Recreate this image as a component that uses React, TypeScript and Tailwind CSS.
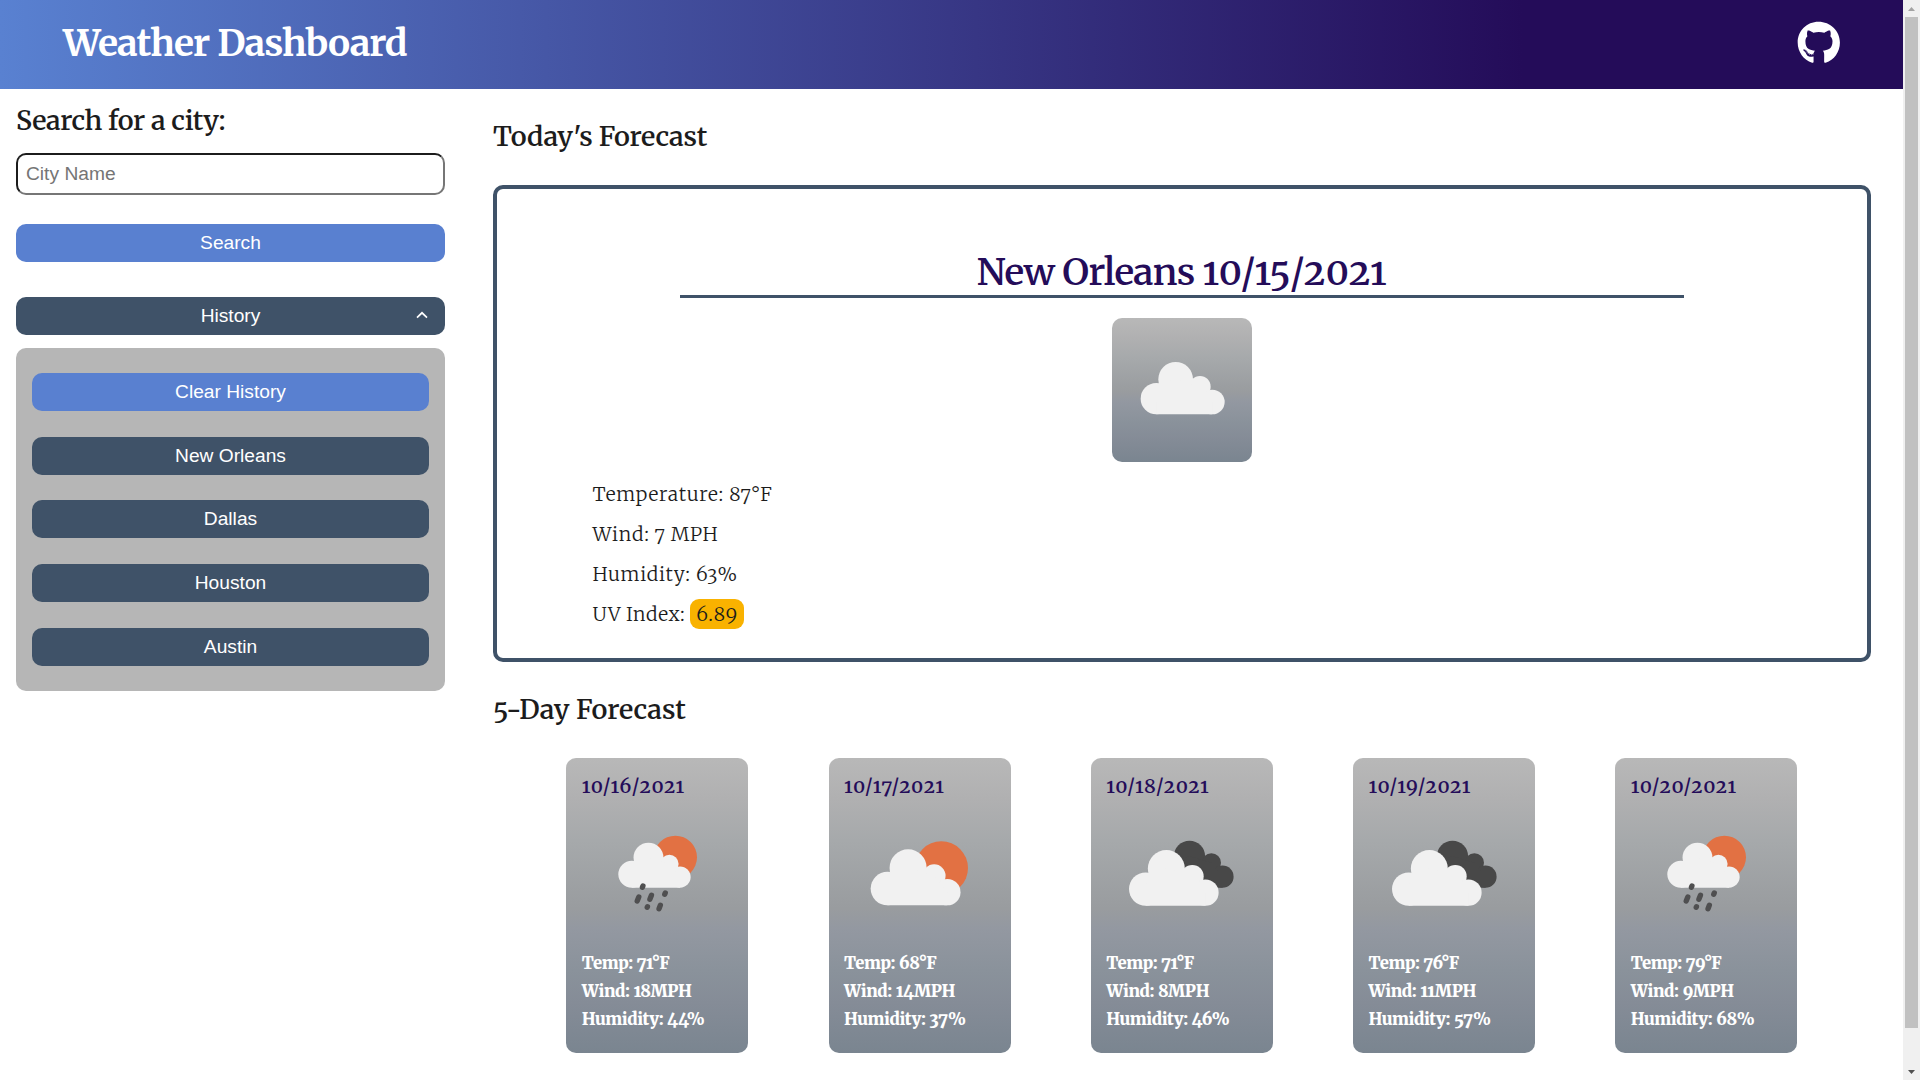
import { useState } from "react";
import { FaGithub } from "react-icons/fa";

type Sky = "rain" | "few" | "broken";

const days: { date: string; sky: Sky; temp: number; wind: number; humidity: number }[] = [
  { date: "10/16/2021", sky: "rain", temp: 71, wind: 18, humidity: 44 },
  { date: "10/17/2021", sky: "few", temp: 68, wind: 14, humidity: 37 },
  { date: "10/18/2021", sky: "broken", temp: 71, wind: 8, humidity: 46 },
  { date: "10/19/2021", sky: "broken", temp: 76, wind: 11, humidity: 57 },
  { date: "10/20/2021", sky: "rain", temp: 79, wind: 9, humidity: 68 },
];

const cities = ["New Orleans", "Dallas", "Houston", "Austin"];

function Cloud({ x, y, scale, fill }: { x: number; y: number; scale: number; fill: string }) {
  return (
    <g transform={`translate(${x} ${y}) scale(${scale})`} fill={fill}>
      <circle cx="47" cy="110" r="47" />
      <circle cx="105" cy="52" r="52" />
      <circle cx="178" cy="74" r="32" />
      <circle cx="215" cy="120" r="37" />
      <path d="M47 157V110L53 66L105 52L178 74L215 120V157Z" />
    </g>
  );
}

const drops = [
  [182, 263, 2],
  [168, 300, 6],
  [206, 295, 6],
  [249, 284, 2],
  [196, 324, 1],
  [233, 324, 5],
];

function SkyIcon({ sky }: { sky: Sky }) {
  return (
    <svg viewBox="0 0 450 450" className="mt-px block size-[150px]">
      {sky === "rain" && (
        <>
          <circle cx="280" cy="175" r="65" fill="#e27143" />
          <Cloud x={109} y={131} scale={0.861} fill="#f1f1f1" />
          {drops.map(([x, y, h]) => (
            <path
              key={x}
              d={`M${x + h * 0.4} ${y - h}L${x - h * 0.4} ${y + h}`}
              stroke="#4f4f50"
              strokeWidth="16"
              strokeLinecap="round"
            />
          ))}
        </>
      )}
      {sky === "few" && (
        <>
          <circle cx="292" cy="207" r="80" fill="#e27143" />
          <Cloud x={80} y={151} scale={1.07} fill="#f1f1f1" />
        </>
      )}
      {sky === "broken" && (
        <>
          <Cloud x={156} y={125} scale={0.9} fill="#484848" />
          <Cloud x={69} y={153} scale={1.067} fill="#f1f1f1" />
        </>
      )}
    </svg>
  );
}

const skyGradient =
  "bg-[linear-gradient(180deg,#b8b8b8_0%,#b0b0b1_14%,#a6a9ab_28%,#999c9f_51%,#9398a1_58%,#8a929b_72%,#858c97_83%,#7a8590_100%)]";

function SideButton({ children, light, className = "" }: { children: React.ReactNode; light?: boolean; className?: string }) {
  return (
    <button
      className={`relative block h-[38px] w-full shrink-0 rounded-[10px] text-center font-['Liberation_Sans',Arial,sans-serif] text-[19.2px] leading-[36px] text-white ${
        light ? "bg-[#5980d0]" : "bg-[#3f5268]"
      } ${className}`}
    >
      {children}
    </button>
  );
}

function Scrollbar() {
  return (
    <div className="flex h-full w-[17px] shrink-0 flex-col items-center bg-[#f0f0f0]">
      <div className="flex h-[17px] items-center">
        <svg width="7" height="4" className="block" fill="#a3a3a3">
          <path d="M0 4L3.5 0L7 4Z" />
        </svg>
      </div>
      <div className="h-[1011px] w-[13px] bg-[#c1c1c1]" />
      <div className="mt-auto flex h-[17px] items-center">
        <svg width="7" height="4" className="block" fill="#505050">
          <path d="M0 0L3.5 4L7 0Z" />
        </svg>
      </div>
    </div>
  );
}

export default function App() {
  const [open, setOpen] = useState(true);
  return (
    <div className="flex h-[1080px] w-[1920px] overflow-hidden bg-white font-['Merriweather','DejaVu_Serif_Condensed',serif] text-[#1c1c1c] oldstyle-nums">
      <div className="flex min-w-0 flex-1 flex-col">
        <header className="flex h-[89px] shrink-0 justify-between bg-[linear-gradient(90deg,#5981d1_0%,#240c59_80%)] pr-[62.5px] pl-[63px] text-white">
          <h1 className="text-[37px] leading-[86px] font-bold tracking-[-0.9px]">Weather Dashboard</h1>
          <a aria-label="GitHub" className="mt-[20.5px]">
            <FaGithub size={43.6} />
          </a>
        </header>

        <div className="flex">
          <aside className="w-[445px] shrink-0 pt-[12px] pl-4">
            <h2 className="text-[26.8px] leading-[40px] font-semibold tracking-[-0.3px]">Search for a city:</h2>
            <input
              placeholder="City Name"
              className="mt-3 block h-[42px] w-full rounded-[10px] border-2 border-t-[#1c1c1c] border-r-[#767676] border-b-[#767676] border-l-[#1c1c1c] px-2 font-['Liberation_Sans',Arial,sans-serif] text-[19.2px] placeholder:text-[#757575]"
            />
            <SideButton light className="mt-[29px]">
              Search
            </SideButton>
            <div onClick={() => setOpen(!open)}>
              <SideButton className="mt-[35px]">
                History
                <svg viewBox="0 0 12 8" className="absolute top-[14px] right-[17px] h-2 w-3" fill="none" stroke="#fff" strokeWidth="1.7">
                  <path d="M1 6.6L6 1.8L11 6.6" />
                </svg>
              </SideButton>
            </div>
            {open && (
              <div className="mt-[13px] flex h-[343px] flex-col gap-[25.7px] rounded-[10px] bg-[#b6b6b6] px-4 pt-[25px]">
                <SideButton light>Clear History</SideButton>
                {cities.map((c) => (
                  <SideButton key={c}>{c}</SideButton>
                ))}
              </div>
            )}
          </aside>

          <main className="ml-12 w-[1378px] pt-[24px]">
            <h2 className="text-[26.9px] leading-[48px] font-semibold tracking-[-0.2px]">Today's Forecast</h2>
            <section className="mt-6 flex h-[477px] flex-col items-center rounded-[10px] border-4 border-[#3f5268] pt-[60px]">
              <h3 className="w-[1004px] border-b-[3px] border-[#3f5268] text-center text-[37px] leading-[46px] font-semibold text-[#240c59]">
                <span className="tracking-[-0.75px]">New Orleans </span>
                <span className="tracking-[0.85px]">10/15/2021</span>
              </h3>
              <div className={`mt-5 h-36 w-[140px] shrink-0 rounded-[10px] ${skyGradient}`}>
                <svg viewBox="0 0 420 432" className="block h-36 w-[140px]">
                  <Cloud x={86} y={132} scale={1} fill="#f1f1f1" />
                </svg>
              </div>
              <ul className="mt-3 w-full pl-[95.5px] text-[19.2px] leading-10 font-[340] tracking-[0.75px]">
                <li>Temperature: 87°F</li>
                <li>Wind: 7 MPH</li>
                <li>Humidity: 63%</li>
                <li>
                  <span className="tracking-[0.5px]">UV Index: </span>
                  <span className="inline-block h-[30px] rounded-[9px] bg-[#f9b200] px-1.5 leading-[30px] tracking-[0.95px]">6.89</span>
                </li>
              </ul>
            </section>

            <h2 className="mt-6 text-[26.9px] leading-[48px] font-semibold">5-Day Forecast</h2>
            <div className="mt-6 ml-[73.4px] flex w-[1231px] justify-between">
              {days.map((d) => (
                <article key={d.date} className={`h-[295px] w-[182px] rounded-[10px] p-4 pl-[15.4px] ${skyGradient}`}>
                  <h4 className="text-[19.2px] leading-6 font-semibold tracking-[1.05px] text-[#240c59]">{d.date}</h4>
                  <SkyIcon sky={d.sky} />
                  <div className="pt-px text-[16.6px] leading-7 font-black tracking-[-0.3px] whitespace-nowrap text-white">
                    <p>Temp: {d.temp}°F</p>
                    <p>Wind: {d.wind}MPH</p>
                    <p>Humidity: {d.humidity}%</p>
                  </div>
                </article>
              ))}
            </div>
          </main>
        </div>
      </div>
      <Scrollbar />
    </div>
  );
}
